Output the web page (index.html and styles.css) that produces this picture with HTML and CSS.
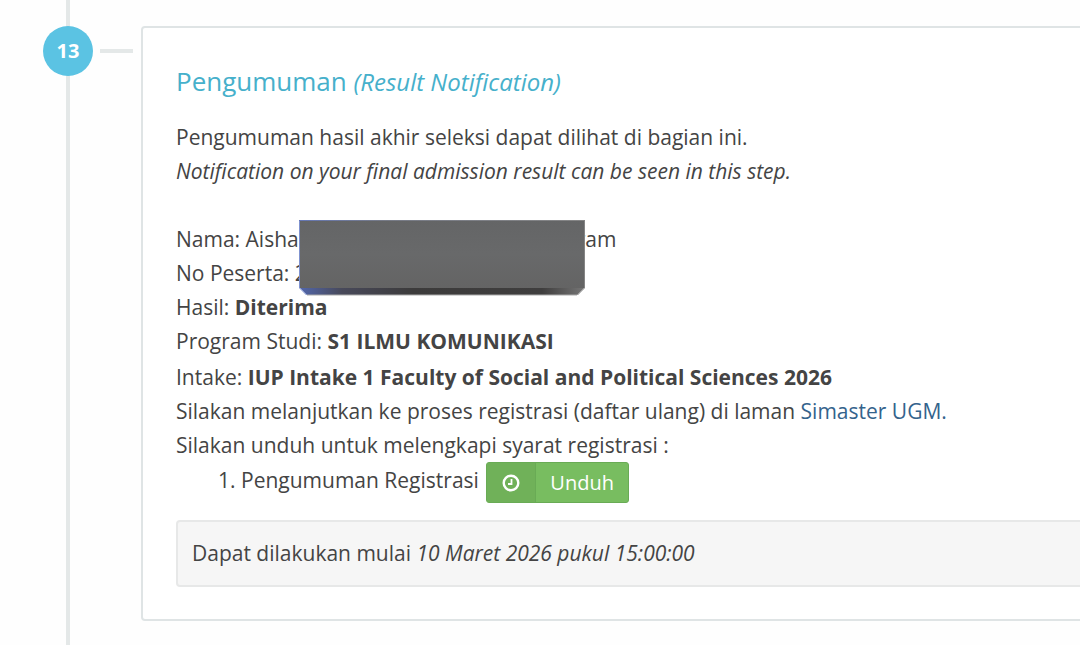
FILE: index.html
```html
<!DOCTYPE html>
<html lang="id">
<head>
<meta charset="utf-8">
<title>Pengumuman</title>
<link rel="stylesheet" href="styles.css">
</head>
<body>
<div class="timeline">
  <div class="step">
    <div class="marker">13</div>
    <div class="connector"></div>
    <div class="panel">
      <h3>Pengumuman <em>(Result Notification)</em></h3>
      <p>Pengumuman hasil akhir seleksi dapat dilihat di bagian ini.<br>
      <em>Notification on your final admission result can be seen in this step.</em></p>
      <div class="result">
        <div>Nama: Aisha<span class="hidden-name"><span class="cover"><svg width="286" height="76" viewBox="0 0 286 76" aria-hidden="true">
          <defs>
            <linearGradient id="face" x1="0" y1="0" x2="0" y2="1">
              <stop offset="0" stop-color="#646566"/>
              <stop offset=".5" stop-color="#68696a"/>
              <stop offset="1" stop-color="#646464"/>
            </linearGradient>
            <linearGradient id="lip">
              <stop offset="0" stop-color="#5267ad"/>
              <stop offset=".15" stop-color="#48495a"/>
              <stop offset=".4" stop-color="#3c3b3b"/>
              <stop offset=".85" stop-color="#3f3e3e"/>
              <stop offset="1" stop-color="#777"/>
            </linearGradient>
            <linearGradient id="edge" gradientUnits="userSpaceOnUse" x1="0" y1="0" x2="286" y2="0">
              <stop offset="0" stop-color="#6577b5"/>
              <stop offset=".3" stop-color="#777b87"/>
              <stop offset="1" stop-color="#858585"/>
            </linearGradient>
          </defs>
          <path d="M0 67h286l-8 8H8z" fill="url(#lip)"/>
          <path d="M8 75h270" stroke="#aaa"/>
          <rect width="286" height="68" rx="1" fill="url(#face)"/>
          <path d="M0 .5h286" stroke="url(#edge)"/>
          <path d="M.5 1v67l7 7" fill="none" stroke="#7f92cf"/>
          <path d="M285.500 1v67l-7 7" fill="none" stroke="#858585"/>
        </svg></span></span>ram</div>
        <div>No Peserta: 2</div>
        <div>Hasil: <b>Diterima</b></div>
        <div>Program Studi: <b>S1 ILMU KOMUNIKASI</b></div>
      </div>
      <div class="next">
        <div>Intake: <b>IUP Intake 1 Faculty of Social and Political Sciences 2026</b></div>
        <div>Silakan melanjutkan ke proses registrasi (daftar ulang) di laman <a href="#">Simaster UGM.</a></div>
        <div>Silakan unduh untuk melengkapi syarat registrasi :</div>
        <ol>
          <li>Pengumuman Registrasi <button type="button" class="btn"><span class="btn-icon"><svg width="18" height="18" viewBox="0 0 18 18" fill="none" stroke="#fff" aria-hidden="true"><circle cx="9" cy="9" r="7.300" stroke-width="2.400"/><path d="M9.500 5v5H6" stroke-width="1.800"/></svg></span><span class="btn-label">Unduh</span></button></li>
        </ol>
      </div>
      <div class="well">Dapat dilakukan mulai <em>10 Maret 2026 pukul 15:00:00</em></div>
    </div>
  </div>
</div>
</body>
</html>
```
FILE: styles.css
```css
* { box-sizing: border-box; }

body { margin: 0; background: #fefefe; color: #444; font-family: "Open Sans", "Noto Sans", sans-serif; font-size: 21px; line-height: 34px; overflow: hidden; }

h3, p, ol { margin: 0; }
h3 { color: #46b0cb; font-size: 26px; font-weight: normal; line-height: 36px; }
h3 em { font-size: 24px; }
p { margin-top: 20px; }
a { color: #34638c; text-decoration: none; }

.timeline { position: relative; min-height: 100vh; padding: 26px 0 24px 43px; }
/* vertical rule behind the step numbers */
.timeline:before { content: ""; position: absolute; top: 0; bottom: 0; left: 66px; width: 4px; background: #e4e8e8; }

.step { display: flex; align-items: flex-start; }
.marker { position: relative; flex: none; width: 50px; height: 50px; border-radius: 50%; background: #5bc3e3; color: #fff; font-size: 20px; font-weight: bold; line-height: 50px; text-align: center; }
.connector { flex: none; width: 33px; height: 4px; margin: 23px 8px 0 7px; background: #e4e8e8; }

/* runs past the right side of the window */
.panel { flex: 1; min-width: 0; margin-right: -48px; padding: 35px 33px 32px; border: 2px solid #dfe4e5; border-radius: 4px; background: #fff; }

.result { margin-top: 34px; }
.next { margin-top: 2px; }

.hidden-name { position: relative; display: inline-block; width: 278px; height: 20px; }
.cover { position: absolute; top: -7px; left: 0; z-index: 1; }
.cover svg { display: block; }

ol { padding-left: 65px; }

.btn { display: inline-flex; height: 41px; margin-left: 2px; padding: 0; border: 1px solid #69ab55; border-radius: 3px; background: #78bd60; color: #fff; font: inherit; font-size: 20px; line-height: 39px; vertical-align: middle; cursor: pointer; }
.btn-icon { display: flex; align-items: center; padding: 0 15px; border-right: 1px solid #69ab55; background: #70b159; }
.btn-label { padding: 0 14px; }

.well { margin-top: 17px; padding: 14px 14px 15px; border: 2px solid #e7e8e8; border-radius: 4px; background: #f6f6f6; }
```
